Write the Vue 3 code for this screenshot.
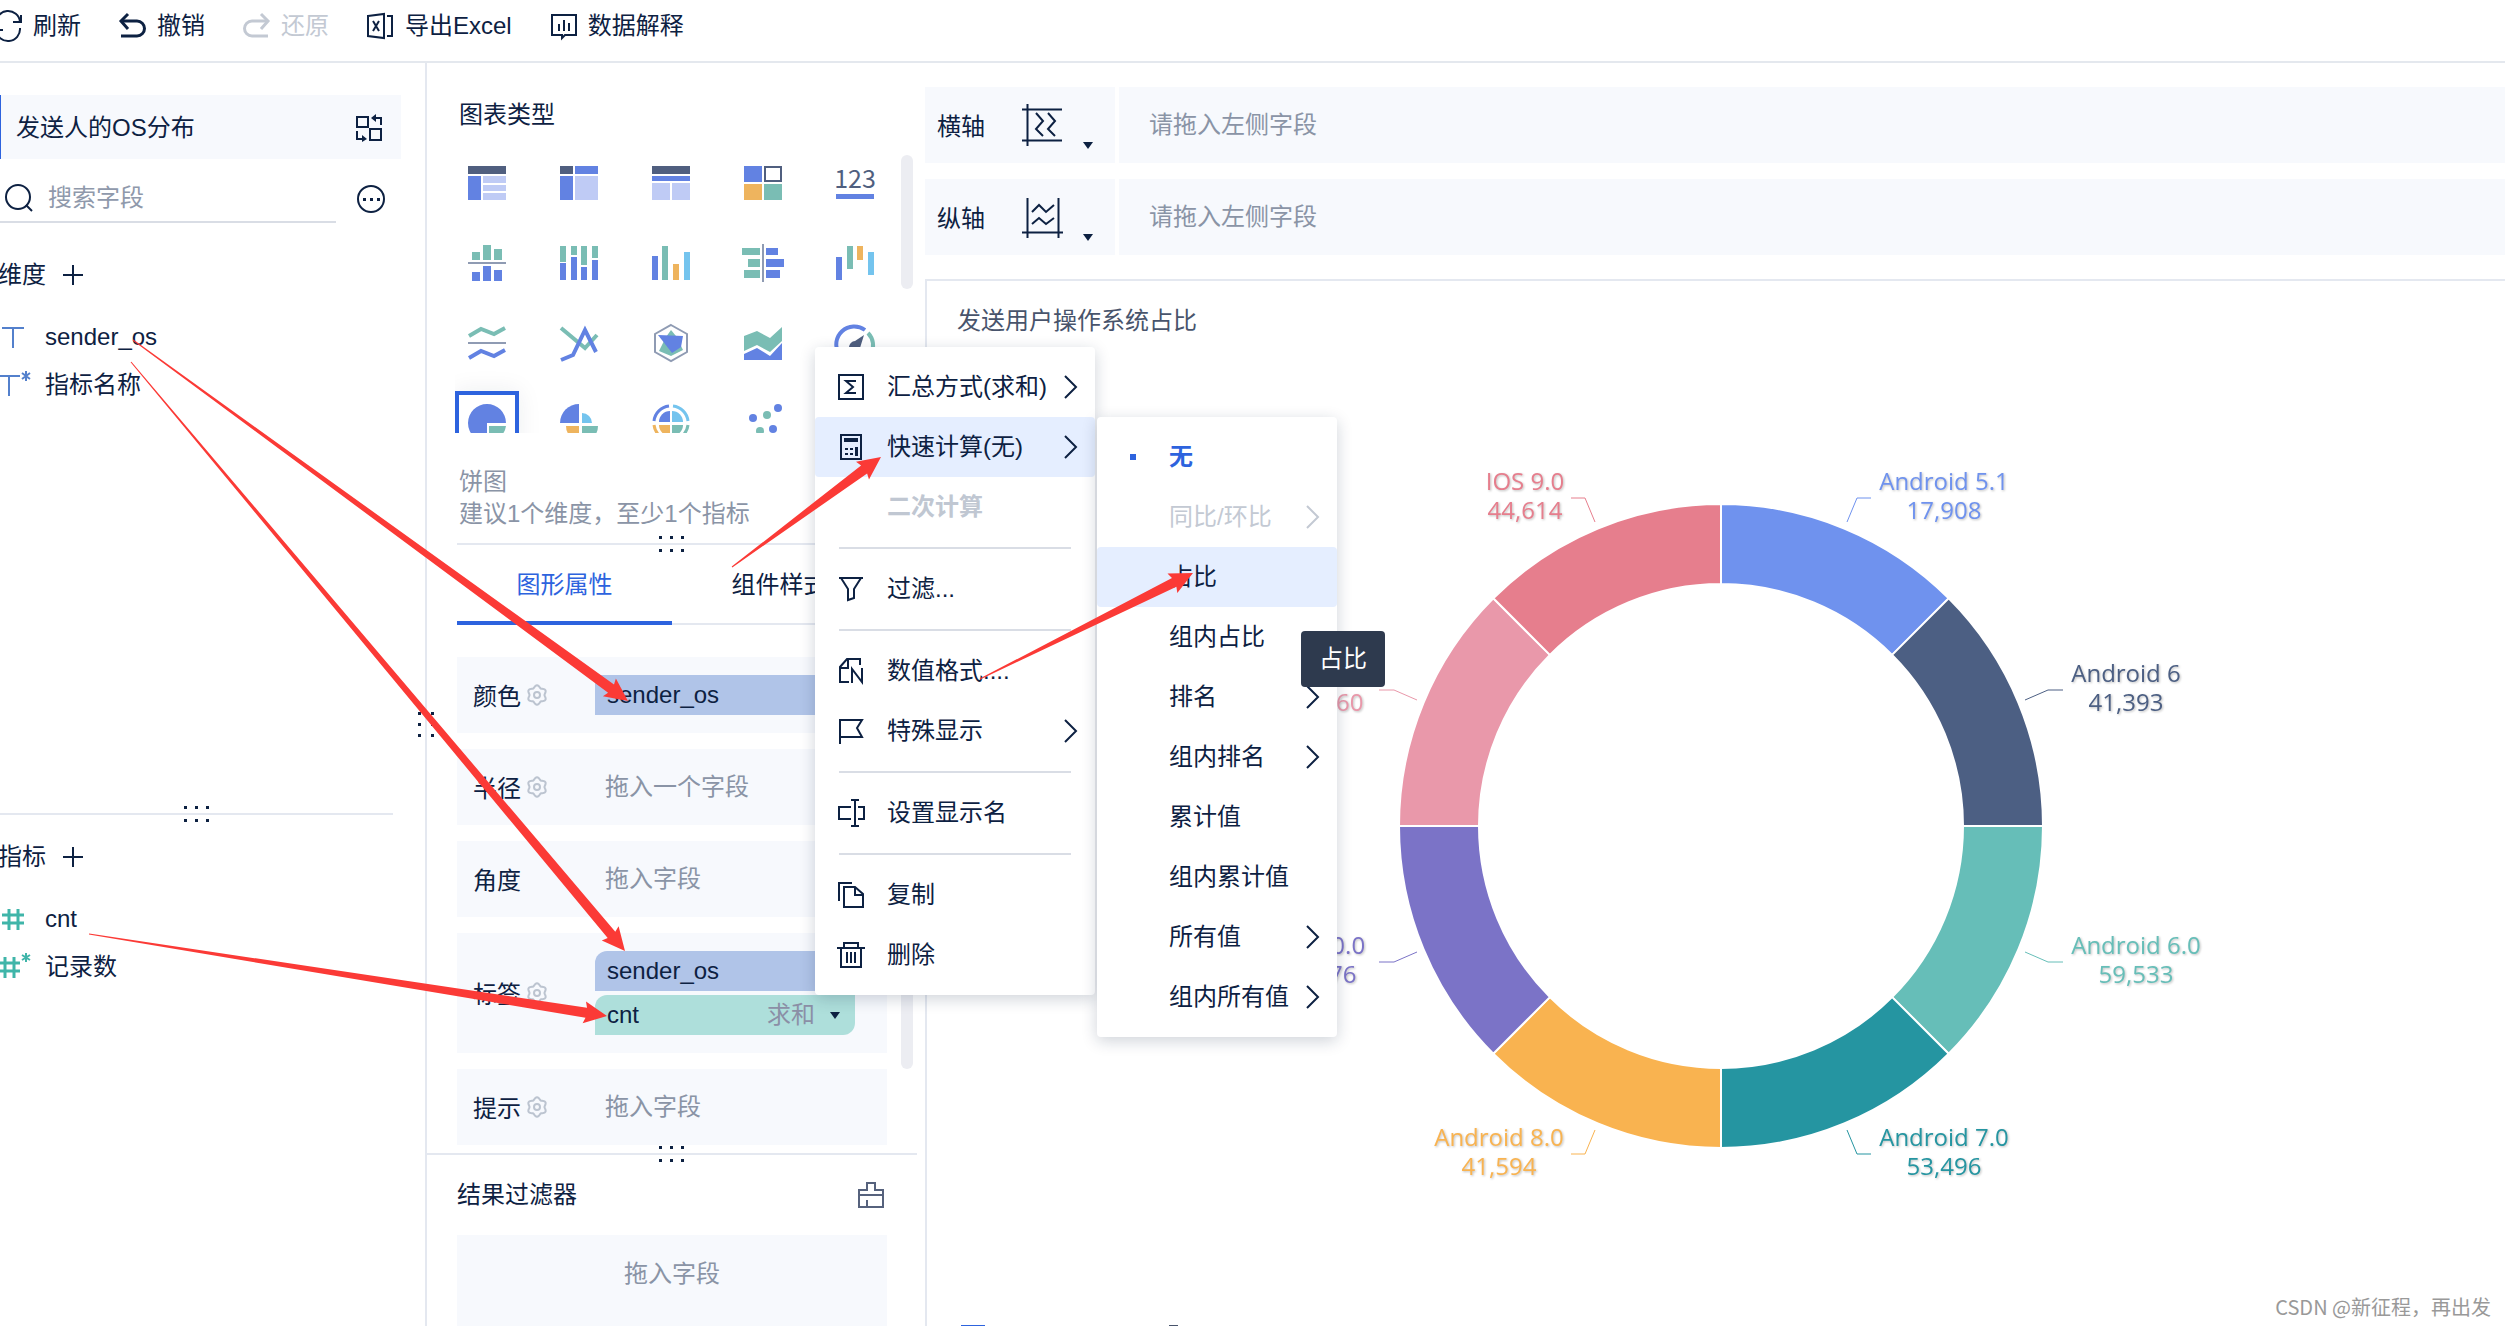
<script setup>
import { ref } from 'vue'

const keyword = ref('')

const DARK = '#505f7f'
const BLUE = '#6282e2'
const LIGHT = '#bfcbf5'
const GREEN = '#7abdb4'
const ORANGE = '#eeb45e'
const CYAN = '#74c4ee'
const GREY = '#8f9bb3'

// Chart type icons on a 40 x 40 canvas: r = rects, p = filled paths, s = stroked paths, c = circles
const chartTypes = [
  { name: '分组表', r: [[1, 3, 38, 8, DARK], [1, 13, 13, 24, BLUE], [16, 13, 23, 7, LIGHT], [16, 22, 23, 6, LIGHT], [16, 30, 23, 7, LIGHT]] },
  { name: '交叉表', r: [[1, 3, 13, 8, DARK], [16, 3, 23, 8, BLUE], [1, 13, 13, 24, BLUE], [16, 13, 23, 24, LIGHT]] },
  { name: '明细表', r: [[1, 3, 38, 8, DARK], [1, 13, 38, 5, BLUE], [1, 20, 18, 17, LIGHT], [21, 20, 18, 17, LIGHT]] },
  { name: '颜色表格', r: [[1, 3, 18, 16, BLUE], [1, 21, 18, 16, ORANGE], [21, 21, 18, 16, GREEN]], s: [['M22 4H38V18H22Z', DARK, 2]] },
  { name: 'KPI指标卡', text: '123', r: [[1, 31, 38, 5, BLUE]] },
  { name: '对比柱状图', r: [[5, 9, 8, 8, GREEN], [16, 2, 8, 15, GREEN], [27, 6, 8, 11, GREEN], [1, 19, 38, 2, GREY], [5, 29, 8, 9, BLUE], [16, 23, 8, 15, BLUE], [27, 27, 8, 11, BLUE]] },
  { name: '堆积柱状图', r: [[1, 3, 6, 16, GREEN], [1, 20, 6, 17, BLUE], [12, 3, 6, 9, GREEN], [12, 14, 6, 23, BLUE], [22, 3, 6, 19, GREEN], [22, 24, 6, 13, BLUE], [33, 3, 6, 12, GREEN], [33, 17, 6, 20, BLUE]] },
  { name: '多系列柱状图', r: [[1, 13, 6, 24, BLUE], [11, 3, 6, 34, GREEN], [22, 21, 6, 16, ORANGE], [33, 9, 6, 28, CYAN]] },
  { name: '对比条形图', r: [[-1, 5, 18, 7, GREEN], [5, 16, 12, 8, GREEN], [1, 27, 16, 8, GREEN], [19, 1, 2, 38, GREY], [23, 5, 12, 7, BLUE], [23, 16, 18, 8, BLUE], [23, 27, 14, 8, BLUE]] },
  { name: '瀑布图', r: [[1, 14, 6, 23, BLUE], [12, 3, 6, 23, GREEN], [22, 3, 6, 14, ORANGE], [33, 9, 6, 23, CYAN]] },
  { name: '范围面积图', r: [[1, 19, 38, 2, GREY]], s: [['M2 13L14 6L27 11L38 5', GREEN, 4], ['M2 35L14 28L27 33L38 27', BLUE, 4]] },
  { name: '折线图', s: [['M2 5L26 25L38 12', GREEN, 4], ['M2 37L14 32L26 7L37 29', BLUE, 4]] },
  { name: '雷达图', s: [['M20 2L36 11V29L20 38L4 29V11Z', GREY, 2]], p: [['M20 7L25 13L32 27L20 33L8 28L15 14Z', GREEN], ['M7 12L32 13L30 24L21 30Z', BLUE]] },
  { name: '面积图', p: [['M1 13L14 8L27 15L39 4V18L27 29L14 22L1 28Z', GREEN], ['M1 31L14 25L27 33L39 20V37H1Z', BLUE]] },
  { name: '仪表盘', s: [['M4 31A18 18 0 0 1 30 7', BLUE, 4], ['M33 10A18 18 0 0 1 36 31', GREEN, 4]], p: [['M29 12L25 25H14C14 21 17 18 20 18Z', DARK]] },
  { name: '饼图', active: true, p: [['M20 20H39A19 19 0 1 0 20 39Z', BLUE], ['M22 23H39A19 19 0 0 1 22 39Z', GREEN]] },
  { name: '玫瑰图', p: [['M20 20H1A19 19 0 0 1 20 1Z', BLUE], ['M23 20V10A10 10 0 0 1 33 20Z', CYAN], ['M20 23V37A13 14 0 0 1 7 23Z', ORANGE], ['M23 23H39A16 16 0 0 1 23 39Z', GREEN]] },
  { name: '多层饼图', s: [['M3 18A17 17 0 0 1 18 3', BLUE, 3], ['M22 3A17 17 0 0 1 37 18', CYAN, 3], ['M3 22A17 17 0 0 0 18 37', ORANGE, 3], ['M37 22A17 17 0 0 1 22 37', GREEN, 3]], p: [['M19 19H8A11 11 0 0 1 19 8Z', BLUE], ['M21 19V8A11 11 0 0 1 32 19Z', CYAN], ['M19 22H8A11 11 0 0 0 19 33Z', ORANGE], ['M21 22H32A11 11 0 0 1 21 33Z', GREEN]] },
  { name: '散点图', c: [[10, 15, BLUE], [24, 12, GREEN], [35, 5, BLUE], [17, 28, GREEN], [30, 26, BLUE]] }
]

// Six-lobed outline shared by every settings gear
const gearPath = Array.from({ length: 72 }, (_, i) => {
  const a = (i * Math.PI) / 36
  const r = 8.6 + 1.1 * Math.cos(6 * (a - Math.PI / 2))
  return `${i ? 'L' : 'M'}${(11 + r * Math.cos(a)).toFixed(2)} ${(11 + r * Math.sin(a)).toFixed(2)}`
}).join('') + 'Z'

const toolbar = [
  { label: '刷新', paths: ['M1 12A12 12 0 0 1 25 10', 'M26 3V10H18', 'M25 16A12 12 0 0 1 1 18', 'M0 25V18H8'] },
  { label: '撤销', heavy: true, paths: ['M9 2L2 9L9 17', 'M2 9H18A7 7 0 0 1 18 24H2'] },
  { label: '还原', heavy: true, disabled: true, paths: ['M18 2L25 9L18 17', 'M25 9H9A7 7 0 0 0 9 24H25'] },
  { label: '导出Excel', paths: ['M1 4L17 2V26L1 24Z', 'M6 9L12 19M12 9L6 19', 'M20 4H25V24H20'] },
  { label: '数据解释', paths: ['M2 3H26V23H15L12 26V23H2Z', 'M9 12V19M14 8V19M19 11V19'] }
]

const dimensions = [
  { label: 'sender_os', star: false },
  { label: '指标名称', star: true }
]
const measures = [
  { label: 'cnt', star: false },
  { label: '记录数', star: true }
]

const attributes = [
  { label: '颜色', gear: true, tags: [{ label: 'sender_os', kind: 'dim flat' }] },
  { label: '半径', gear: true, hint: '拖入一个字段' },
  { label: '角度', gear: false, hint: '拖入字段' },
  { label: '标签', gear: true, tags: [{ label: 'sender_os', kind: 'dim' }, { label: 'cnt', kind: 'measure', agg: '求和' }] },
  { label: '提示', gear: true, hint: '拖入字段' }
]

const axes = [
  { label: '横轴', paths: ['M5.5 0V42M0 5.5H40M0 36.5H40', 'M14 9L21 17L14 25L21 32', 'M26 9L33 17L26 25L33 32'] },
  { label: '纵轴', paths: ['M5.5 2V42M36.5 2V42M0 36.5H41', 'M10 16L17 9L24 16L32 9', 'M10 28L17 22L24 28L32 22'] }
]

const menu = [
  [
    { label: '汇总方式(求和)', more: true, paths: ['M2 2H26V26H2Z', 'M19 8H9L16 14L9 20H19'] },
    { label: '快速计算(无)', more: true, active: true, paths: ['M4 2H24V26H4Z', 'M7 6H21M7 8H21', 'M8 16H11M13 16H16M8 21H11M13 21H16', 'M20 14V23M19 14V23'] },
    { label: '二次计算', disabled: true, paths: [] }
  ],
  [{ label: '过滤...', paths: ['M2 3H26M4 3L11 14V25L17 23V14L24 3'] }],
  [
    { label: '数值格式....', paths: ['M12 25H3V10L10 2H23V8', 'M3 11H11V3', 'M15 26V12L25 25V11'] },
    { label: '特殊显示', more: true, paths: ['M3 27V3H25L20 11L25 20H3'] }
  ],
  [{ label: '设置显示名', paths: ['M14 8H2V20H14', 'M14 1H22M18 1V27M14 27H22', 'M21 8H27V20H21'] }],
  [
    { label: '复制', paths: ['M2 20V2H15', 'M7 6H18L26 13V26H7Z', 'M18 7V14H25'] },
    { label: '删除', paths: ['M0 7H28', 'M7 7V2H21V7', 'M4 7V26H24V7', 'M10 11V22M14 11V22M18 11V22'] }
  ]
]

const submenu = [
  { label: '无', checked: true },
  { label: '同比/环比', disabled: true, more: true },
  { label: '占比', active: true },
  { label: '组内占比' },
  { label: '排名', more: true },
  { label: '组内排名', more: true },
  { label: '累计值' },
  { label: '组内累计值' },
  { label: '所有值', more: true },
  { label: '组内所有值', more: true }
]

// Eight equal slices, clockwise from twelve o'clock; the canvas centre is 430,370
const CX = 430
const CY = 370
const slices = [
  { name: 'Android 5.1', value: '17,908', color: '#6f92ee', x: 653, y: 34 },
  { name: 'Android 6', value: '41,393', color: '#4c5f83', x: 835, y: 226 },
  { name: 'Android 6.0', value: '59,533', color: '#66beb8', x: 845, y: 498 },
  { name: 'Android 7.0', value: '53,496', color: '#2595a1', x: 653, y: 690 },
  { name: 'Android 8.0', value: '41,594', color: '#f9b350', x: 208, y: 690 },
  { name: 'IOS 10.0', value: '48,576', color: '#7b73c7', x: 28, y: 498 },
  { name: 'IOS 8.0', value: '34,160', color: '#e998aa', x: 35, y: 226 },
  { name: 'IOS 9.0', value: '44,614', color: '#e67e8d', x: 234, y: 34 }
].map((s, i) => {
  const at = (r, a) => `${(CX + r * Math.sin(a)).toFixed(2)} ${(CY - r * Math.cos(a)).toFixed(2)}`
  const a0 = (i * Math.PI) / 4
  const a1 = a0 + Math.PI / 4
  const right = i < 4 ? 1 : -1
  const down = i > 1 && i < 6 ? 1 : -1
  const steep = i % 4 === 0 || i % 4 === 3
  const leader = (steep ? [[126, 304], [136, 328], [150, 328]] : [[304, 126], [327, 136], [342, 136]])
    .map(([x, y]) => `${CX + right * x},${CY + down * y}`).join(' ')
  return { ...s, leader, d: `M${at(322, a0)}A322 322 0 0 1 ${at(322, a1)}L${at(242, a1)}A242 242 0 0 0 ${at(242, a0)}Z` }
})

// Tapered annotation arrows, from tail to tip
const arrows = [
  [133, 340, 628, 701],
  [131, 362, 625, 951],
  [89, 934, 607, 1016],
  [732, 567, 881, 457],
  [980, 679, 1193, 573]
].map(([x0, y0, x1, y1]) => {
  const len = Math.hypot(x1 - x0, y1 - y0)
  const ux = (x1 - x0) / len
  const uy = (y1 - y0) / len
  const pt = (back, side) => `${(x1 - ux * back - uy * side).toFixed(1)},${(y1 - uy * back + ux * side).toFixed(1)}`
  return [pt(len, 0.5), pt(21, 5), pt(23, 11), pt(0, 0), pt(23, -11), pt(21, -5), pt(len, -0.5)].join(' ')
})
</script>

<template>
  <div class="app">
    <header class="toolbar">
      <button v-for="t in toolbar" :key="t.label" type="button" class="tool" :disabled="t.disabled">
        <svg class="line-icon" :class="{ bold: t.heavy }" width="28" height="28" viewBox="0 0 28 28"><path v-for="d in t.paths" :key="d" :d="d" /></svg>
        <span>{{ t.label }}</span>
      </button>
    </header>

    <div class="body">
      <aside class="fields">
        <section class="dims">
          <div class="dataset">
            <span>发送人的OS分布</span>
            <button type="button" class="icon-btn" aria-label="切换数据集">
              <svg class="line-icon" width="28" height="28" viewBox="0 0 28 28">
                <path d="M2 3H13V13H2Z" /><path d="M15 15H26V26H15Z" /><path d="M19 4H26V11" /><path d="M2 17V25H9" />
                <path class="solid" d="M16 4L21 0V8Z" /><path class="solid" d="M12 25L7 21V28Z" />
              </svg>
            </button>
          </div>
          <div class="search-row">
            <label class="search">
              <svg class="line-icon" width="30" height="30" viewBox="0 0 30 30"><circle cx="14" cy="14" r="12" /><path d="M22 22L28 28" /></svg>
              <input v-model="keyword" type="text" placeholder="搜索字段" aria-label="搜索字段" />
            </label>
            <button type="button" class="icon-btn" aria-label="更多">
              <svg class="line-icon" width="30" height="30" viewBox="0 0 30 30">
                <circle cx="15" cy="15" r="13" />
                <path class="solid" d="M7 14h3v3h-3zM14 14h3v3h-3zM21 14h3v3h-3z" />
              </svg>
            </button>
          </div>
          <div class="group">
            <h2>维度</h2>
            <button type="button" class="icon-btn" aria-label="添加维度">
              <svg class="line-icon" width="20" height="20" viewBox="0 0 20 20"><path d="M10 0V20M0 10H20" /></svg>
            </button>
          </div>
          <ul>
            <li v-for="f in dimensions" :key="f.label">
              <svg class="type-icon dim-icon" :class="{ starred: f.star }" width="34" height="28" viewBox="0 0 34 28">
                <path d="M2 5H24M13 5V25" />
                <path v-if="f.star" class="star" d="M30 0V10M26 2L34 8M34 2L26 8" />
              </svg>
              <span>{{ f.label }}</span>
            </li>
          </ul>
        </section>
        <div class="split left-split">
          <svg class="grip" width="25" height="16" viewBox="0 0 25 16"><path d="M0 0h3v3h-3zM11 0h3v3h-3zM22 0h3v3h-3zM0 13h3v3h-3zM11 13h3v3h-3zM22 13h3v3h-3z" /></svg>
        </div>
        <section class="meas">
          <div class="group">
            <h2>指标</h2>
            <button type="button" class="icon-btn" aria-label="添加指标">
              <svg class="line-icon" width="20" height="20" viewBox="0 0 20 20"><path d="M10 0V20M0 10H20" /></svg>
            </button>
          </div>
          <ul>
            <li v-for="f in measures" :key="f.label">
              <svg class="type-icon measure-icon" :class="{ starred: f.star }" width="34" height="28" viewBox="0 0 34 28">
                <path d="M9 4V25M18 4V25M2 10H24M2 18H24" />
                <path v-if="f.star" class="star" d="M30 0V9M26 2L34 7M34 2L26 7" />
              </svg>
              <span>{{ f.label }}</span>
            </li>
          </ul>
        </section>
        <svg class="side-grip" width="16" height="25" viewBox="0 0 16 25"><path d="M0 0h3v3h-3zM13 0h3v3h-3zM0 11h3v3h-3zM13 11h3v3h-3zM0 22h3v3h-3zM13 22h3v3h-3z" /></svg>
      </aside>

      <section class="config">
        <h2 class="config-title">图表类型</h2>
        <div class="types-wrap">
          <div class="types">
            <button v-for="t in chartTypes" :key="t.name" type="button" class="type" :class="{ active: t.active }" :aria-label="t.name">
              <svg width="40" height="40" viewBox="0 0 40 40">
                <text v-if="t.text" x="20" y="25" text-anchor="middle" class="kpi">{{ t.text }}</text>
                <rect v-for="(r, i) in t.r" :key="'r' + i" :x="r[0]" :y="r[1]" :width="r[2]" :height="r[3]" :fill="r[4]" />
                <path v-for="(s, i) in t.s" :key="'s' + i" :d="s[0]" fill="none" :stroke="s[1]" :stroke-width="s[2]" />
                <path v-for="(p, i) in t.p" :key="'p' + i" :d="p[0]" :fill="p[1]" />
                <circle v-for="(c, i) in t.c" :key="'c' + i" :cx="c[0]" :cy="c[1]" r="4" :fill="c[2]" />
              </svg>
            </button>
          </div>
          <div class="thumb types-thumb"></div>
        </div>
        <div class="type-note">
          <p>饼图</p>
          <p>建议1个维度，至少1个指标</p>
        </div>
        <div class="split">
          <svg class="grip" width="25" height="16" viewBox="0 0 25 16"><path d="M0 0h3v3h-3zM11 0h3v3h-3zM22 0h3v3h-3zM0 13h3v3h-3zM11 13h3v3h-3zM22 13h3v3h-3z" /></svg>
        </div>
        <nav class="tabs">
          <button type="button" class="tab current">图形属性</button>
          <button type="button" class="tab">组件样式</button>
        </nav>
        <div class="attrs-wrap">
          <div class="attrs">
            <div v-for="a in attributes" :key="a.label" class="attr">
              <span class="attr-label">{{ a.label }}</span>
              <button v-if="a.gear" type="button" class="icon-btn" :aria-label="a.label + '设置'">
                <svg class="gear" width="22" height="22" viewBox="0 0 22 22"><path :d="gearPath" /><circle cx="11" cy="11" r="3" /></svg>
              </button>
              <div v-if="a.tags" class="tags">
                <div v-for="t in a.tags" :key="t.label" class="tag" :class="t.kind">
                  <span>{{ t.label }}</span>
                  <button v-if="t.agg" type="button" class="agg">{{ t.agg }}<i class="caret"></i></button>
                </div>
              </div>
              <span v-else class="hint">{{ a.hint }}</span>
            </div>
          </div>
          <div class="thumb attrs-thumb"></div>
        </div>
        <div class="split wide-split">
          <svg class="grip" width="25" height="16" viewBox="0 0 25 16"><path d="M0 0h3v3h-3zM11 0h3v3h-3zM22 0h3v3h-3zM0 13h3v3h-3zM11 13h3v3h-3zM22 13h3v3h-3z" /></svg>
        </div>
        <div class="filter-head">
          <h2>结果过滤器</h2>
          <button type="button" class="icon-btn" aria-label="清空过滤器">
            <svg class="line-icon soft" width="28" height="28" viewBox="0 0 28 28"><path d="M2 9H10V2H18V9H26V26H2ZM2 14H26M10 19V26" /></svg>
          </button>
        </div>
        <div class="filter-drop">拖入字段</div>
      </section>

      <main class="canvas">
        <div v-for="a in axes" :key="a.label" class="axis">
          <div class="axis-name">
            <span>{{ a.label }}</span>
            <svg class="line-icon" width="42" height="42" viewBox="0 0 42 42"><path v-for="d in a.paths" :key="d" :d="d" /></svg>
            <i class="caret"></i>
          </div>
          <div class="axis-drop">请拖入左侧字段</div>
        </div>
        <section class="panel">
          <h1>发送用户操作系统占比</h1>
          <div class="chart">
            <svg width="860" height="740" viewBox="0 0 860 740">
              <g v-for="s in slices" :key="s.name">
                <path :d="s.d" :fill="s.color" stroke="#fff" stroke-width="2" />
                <polyline :points="s.leader" fill="none" :stroke="s.color" />
                <text class="slice-label" text-anchor="middle" :fill="s.color">
                  <tspan :x="s.x" :y="s.y">{{ s.name }}</tspan>
                  <tspan :x="s.x" :y="s.y + 29">{{ s.value }}</tspan>
                </text>
              </g>
            </svg>
          </div>
          <footer class="sheet-bar"><i class="sheet-current"></i><i class="sheet-other"></i></footer>
        </section>
      </main>
    </div>

    <div class="menu">
      <div v-for="(g, gi) in menu" :key="gi" class="menu-group">
        <button v-for="m in g" :key="m.label" type="button" class="menu-item" :class="{ active: m.active, off: m.disabled }" :disabled="m.disabled">
          <svg class="line-icon" width="28" height="28" viewBox="0 0 28 28"><path v-for="d in m.paths" :key="d" :d="d" /></svg>
          <span class="menu-text">{{ m.label }}</span>
          <svg v-if="m.more" class="line-icon chevron" width="14" height="26" viewBox="0 0 14 26"><path d="M1 2L12 13L1 24" /></svg>
        </button>
      </div>
    </div>

    <div class="menu submenu">
      <button v-for="m in submenu" :key="m.label" type="button" class="menu-item" :class="{ active: m.active, faded: m.disabled, checked: m.checked }" :disabled="m.disabled">
        <span class="mark"></span>
        <span class="menu-text">{{ m.label }}</span>
        <svg v-if="m.more" class="line-icon chevron" width="14" height="26" viewBox="0 0 14 26"><path d="M1 2L12 13L1 24" /></svg>
      </button>
    </div>

    <div class="tooltip" role="tooltip">占比</div>

    <svg class="arrows" width="1300" height="1100" viewBox="0 0 1300 1100"><polygon v-for="a in arrows" :key="a" :points="a" /></svg>

    <div class="watermark">CSDN @新征程，再出发</div>
  </div>
</template>

<style>
body {
  margin: 0;
  background: #fff;
}
</style>

<style scoped>
.app {
  position: relative;
  display: flex;
  flex-direction: column;
  height: 100vh;
  overflow: hidden;
  background: #fff;
  color: #0d2142;
  font-family: "Liberation Sans", "Noto Sans CJK SC", sans-serif;
  font-size: 24px;
  line-height: 32px;
}
.app *,
.app *::before {
  box-sizing: border-box;
}
button {
  padding: 0;
  border: 0;
  background: none;
  color: inherit;
  font: inherit;
}
h1,
h2,
p,
ul {
  margin: 0;
  padding: 0;
  font-size: 24px;
  font-weight: 400;
  list-style: none;
}
svg {
  display: block;
  flex: none;
  overflow: visible;
}
.line-icon {
  fill: none;
  stroke: currentColor;
  stroke-width: 2;
}
.line-icon.bold {
  stroke-width: 3;
}
.line-icon .solid {
  fill: currentColor;
  stroke: none;
}
.soft {
  color: #56627d;
}
.icon-btn {
  display: flex;
}
.caret {
  width: 0;
  height: 0;
  border: 5px solid transparent;
  border-top: 7px solid #0d2142;
  border-bottom: 0;
}

.toolbar {
  display: flex;
  flex: none;
  gap: 38px;
  height: 63px;
  margin-left: -5px;
  padding-bottom: 10px;
  border-bottom: 2px solid #e4e8ee;
}
.tool {
  display: flex;
  align-items: center;
  gap: 10px;
}
.tool:disabled {
  color: #c3c9d3;
}

.body {
  display: flex;
  flex: 1;
  min-height: 0;
}

.fields {
  position: relative;
  display: flex;
  flex: none;
  flex-direction: column;
  width: 427px;
  border-right: 2px solid #e4e8f0;
}
.dims {
  flex: 750 1 0;
}
.meas {
  flex: 511 1 0;
}
.dataset {
  display: flex;
  align-items: center;
  justify-content: space-between;
  width: 401px;
  height: 64px;
  margin-top: 32px;
  padding: 2px 18px 0 15px;
  border-left: 1px solid #2d63de;
  background: #f7f9fd;
}
.search-row {
  display: flex;
  align-items: center;
  gap: 20px;
  margin-top: 16px;
}
.search {
  display: flex;
  align-items: center;
  gap: 14px;
  width: 336px;
  height: 48px;
  padding-left: 4px;
  border-bottom: 2px solid #d9dde5;
}
.search input {
  width: 240px;
  padding: 0;
  border: 0;
  outline: 0;
  background: none;
  color: inherit;
  font: inherit;
}
.search input::placeholder {
  color: #8f99ab;
}
.group {
  display: flex;
  align-items: center;
  gap: 17px;
  margin: 36px 0 22px -2px;
}
.meas .group {
  margin-top: 26px;
}
.fields li {
  display: flex;
  align-items: center;
  gap: 11px;
  height: 48px;
}
.type-icon {
  fill: none;
  stroke-width: 2;
}
.dim-icon {
  stroke: #5380cc;
}
.measure-icon {
  stroke: #3fb5a9;
  stroke-width: 3;
}
.starred {
  margin-left: -4px;
  margin-right: 4px;
}
.star {
  stroke-width: 2;
}
.split {
  position: relative;
  flex: none;
  height: 2px;
  background: #e4e8f0;
}
.left-split {
  width: 393px;
}
.grip,
.side-grip {
  position: absolute;
  fill: #0d2142;
}
.grip {
  top: -7px;
  left: calc(50% - 13px);
}
.side-grip {
  top: 649px;
  right: -9px;
}

.config {
  display: flex;
  flex: none;
  flex-direction: column;
  width: 498px;
  padding: 0 38px 0 30px;
}
.config-title {
  margin: 36px 0 20px;
  padding-left: 2px;
}
.types-wrap,
.attrs-wrap {
  position: relative;
}
.types {
  display: grid;
  grid-template-columns: repeat(5, 64px);
  grid-auto-rows: 64px;
  gap: 16px 28px;
  height: 282px;
  margin-left: -2px;
  overflow: hidden;
}
.type {
  display: flex;
  align-items: center;
  justify-content: center;
}
.type.active {
  border: 4px solid #2d63de;
  box-shadow: 0 0 24px rgba(13, 33, 66, 0.08);
}
.kpi {
  fill: #505f7f;
  font-family: "Noto Sans CJK SC", sans-serif;
  font-size: 25px;
}
.thumb {
  position: absolute;
  right: -26px;
  width: 12px;
  border-radius: 6px;
  background: #ecedf2;
}
.types-thumb {
  top: 4px;
  height: 134px;
}
.attrs-thumb {
  top: 32px;
  height: 412px;
}
.type-note {
  margin: 33px 0 13px;
  padding-left: 2px;
  color: #8a94a6;
}
.tabs {
  display: flex;
  flex: none;
  height: 80px;
  border-bottom: 2px solid #e4e8f0;
}
.tab {
  flex: 1;
  height: 80px;
  border-top: 4px solid transparent;
  border-bottom: 4px solid transparent;
}
.tab.current {
  border-bottom-color: #2d63de;
  color: #2d63de;
}
.attrs {
  display: flex;
  flex-direction: column;
  gap: 16px;
  padding: 32px 0 8px;
}
.attr {
  display: flex;
  align-items: center;
  min-height: 76px;
  padding: 18px 32px 18px 16px;
  background: #f7f9fd;
}
.attr-label {
  width: 53px;
  padding-top: 3px;
}
.gear {
  fill: none;
  stroke: #bcc4d0;
  stroke-width: 2;
}
.tags {
  display: flex;
  flex-direction: column;
  gap: 4px;
  width: 260px;
  margin-left: auto;
}
.tag {
  display: flex;
  align-items: center;
  justify-content: space-between;
  height: 40px;
  padding: 0 15px 0 12px;
  border-radius: 12px 0;
}
.tag.dim {
  background: #b0c4e8;
}
.tag.flat {
  border-radius: 0;
}
.tag.measure {
  background: #aedfdb;
}
.agg {
  display: flex;
  align-items: center;
  gap: 15px;
  color: #8b8fa6;
}
.hint {
  width: 250px;
  margin-left: auto;
  color: #8a94a6;
}
.wide-split {
  margin: 0 -30px;
}
.filter-head {
  display: flex;
  flex: none;
  align-items: center;
  justify-content: space-between;
  height: 80px;
  padding-right: 2px;
}
.filter-drop {
  flex: 1;
  padding-top: 23px;
  background: #f7f9fd;
  color: #8a94a6;
  text-align: center;
}

.canvas {
  display: flex;
  flex: 1;
  flex-direction: column;
  gap: 16px;
  min-width: 0;
  padding-top: 24px;
}
.axis {
  display: flex;
  flex: none;
  height: 76px;
  background: #f7f9fd;
}
.axis-name {
  display: flex;
  align-items: center;
  width: 194px;
  padding-left: 12px;
  border-right: 4px solid #fff;
}
.axis-name span {
  padding-top: 4px;
}
.axis-name svg {
  margin: 0 19px 0 37px;
}
.axis-name .caret {
  align-self: flex-end;
  margin-bottom: 14px;
}
.axis-drop {
  padding-left: 30px;
  color: #8a94a6;
  line-height: 76px;
}
.panel {
  display: flex;
  flex: 1;
  flex-direction: column;
  min-height: 0;
  margin-top: 8px;
  border-top: 2px solid #e4e8f0;
  border-left: 2px solid #e4e8f0;
}
.panel h1 {
  padding: 24px 30px 0;
  color: #48546c;
}
.chart {
  display: flex;
  flex: 1;
  justify-content: center;
  min-height: 0;
  padding: 119px 0 0 10px;
}
.slice-label {
  font-family: "Open Sans", "Noto Sans", sans-serif;
  font-size: 24px;
  font-weight: 500;
  filter: drop-shadow(1px 1px 1px rgba(0, 0, 0, 0.25));
}
.sheet-bar {
  display: flex;
  flex: none;
  gap: 184px;
  height: 1px;
  padding-left: 34px;
}
.sheet-current {
  width: 24px;
  background: #2d63de;
}
.sheet-other {
  width: 9px;
  background: #48546c;
}

.menu {
  position: absolute;
  top: 347px;
  left: 815px;
  width: 280px;
  padding: 10px 0;
  border-radius: 4px;
  background: #fff;
  box-shadow: 0 4px 16px rgba(13, 33, 66, 0.2);
}
.submenu {
  top: 417px;
  left: 1097px;
  width: 240px;
}
.menu-group + .menu-group::before {
  display: block;
  height: 2px;
  margin: 10px 24px;
  background: #d9dde5;
  content: "";
}
.menu-item {
  display: flex;
  align-items: center;
  width: 100%;
  height: 60px;
  padding: 0 17px 0 22px;
  border-radius: 4px;
  text-align: left;
  white-space: nowrap;
}
.menu-text {
  margin-left: 22px;
}
.menu-item.active {
  background: #e5eeff;
}
.menu-item.off {
  color: #c0c7d2;
  font-weight: 700;
}
.menu-item.faded {
  color: #c3c9d3;
}
.menu-item.checked {
  color: #2d63de;
  font-weight: 700;
}
.chevron {
  margin-left: auto;
}
.mark {
  width: 28px;
  height: 6px;
}
.checked .mark::before {
  display: block;
  width: 6px;
  height: 6px;
  margin-left: 11px;
  background: #2d63de;
  content: "";
}
.tooltip {
  position: absolute;
  top: 631px;
  left: 1301px;
  padding: 12px 18px;
  border-radius: 4px;
  background: #2e3a4e;
  color: #fff;
}
.arrows {
  position: absolute;
  top: 0;
  left: 0;
  fill: #fb3a36;
  pointer-events: none;
}
.watermark {
  position: absolute;
  right: 14px;
  bottom: 3px;
  color: #999;
  font-family: "Noto Sans CJK SC", sans-serif;
  font-size: 20px;
}
</style>
